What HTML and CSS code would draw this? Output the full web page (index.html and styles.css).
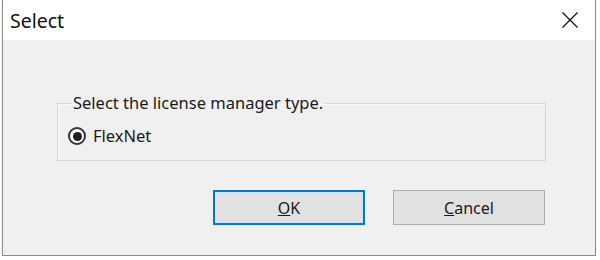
FILE: index.html
```html
<!DOCTYPE html>
<html lang="en">
<head>
  <meta charset="UTF-8" />
  <title>Select</title>
  <link rel="stylesheet" href="styles.css">
</head>
<body>
  <div class="window">
    <div class="titlebar">
      <span class="title">Select</span>
      <button class="close" aria-label="Close">
        <svg width="16" height="16" viewBox="0 0 16 16">
          <path d="M0.5 0.5 L15.5 15.5 M15.5 0.5 L0.5 15.5" stroke="#111" stroke-width="1.3" fill="none" />
        </svg>
      </button>
    </div>

    <div class="dialog-body">
      <fieldset class="group">
        <legend>Select the license manager type.</legend>
        <label class="radio">
          <span class="radio-mark"><span class="radio-dot"></span></span>
          FlexNet
        </label>
      </fieldset>

      <div class="buttons">
        <button class="btn default"><u>O</u>K</button>
        <button class="btn"><u>C</u>ancel</button>
      </div>
    </div>
  </div>
</body>
</html>
```

FILE: styles.css
```css
body {
  margin: 0;
  background: #fff;
  font-family: "Noto Sans", "Open Sans", sans-serif;
  color: #1a1a1a;
}
.window {
  margin-left: 2px;
  width: 594px;
  height: 256px;
  box-sizing: border-box;
  border: 1px solid #8c8c8c;
  border-top: none;
  box-shadow: 0 1px 1px rgba(0,0,0,0.25);
  background: #f0f0f0;
  display: flex;
  flex-direction: column;
}
.titlebar {
  height: 40px;
  background: #fff;
  display: flex;
  align-items: center;
  justify-content: space-between;
  padding: 0 17px 0 7px;
}
.title {
  font-size: 19.5px;
  color: #111;
}
.close {
  border: none;
  background: none;
  padding: 0;
  width: 16px;
  height: 16px;
  display: flex;
}
.dialog-body {
  flex: 1;
  padding: 53px 0 0 54px;
}
.group {
  width: 489px;
  height: 68px;
  box-sizing: border-box;
  margin: 0;
  padding: 0 0 0 10px;
  border: 1px solid #d6d6d6;
  box-shadow: inset 1px 1px 0 #fafafa;
}
.group legend {
  margin-left: 3px;
  padding: 0 2px;
  font-size: 16.5px;
  line-height: 20px;
}
.radio {
  display: flex;
  align-items: center;
  gap: 7px;
  font-size: 16.5px;
  line-height: 22px;
  margin-top: 12px;
}
.radio-mark {
  width: 18px;
  height: 18px;
  box-sizing: border-box;
  border: 2px solid #333;
  border-radius: 50%;
  display: flex;
  align-items: center;
  justify-content: center;
  background: #fff;
}
.radio-dot {
  width: 9px;
  height: 9px;
  border-radius: 50%;
  background: #1e1e1e;
}
.buttons {
  display: flex;
  justify-content: flex-end;
  gap: 28px;
  margin-top: 29px;
  padding-right: 50px;
}
.btn {
  width: 152px;
  height: 35px;
  box-sizing: border-box;
  border: 1px solid #adadad;
  background: #e1e1e1;
  font-family: inherit;
  font-size: 16px;
  color: #1a1a1a;
  padding: 0;
}
.btn.default {
  border: 2px solid #0078d7;
  box-shadow: inset 0 0 0 1px #cce4f7;
}
```
